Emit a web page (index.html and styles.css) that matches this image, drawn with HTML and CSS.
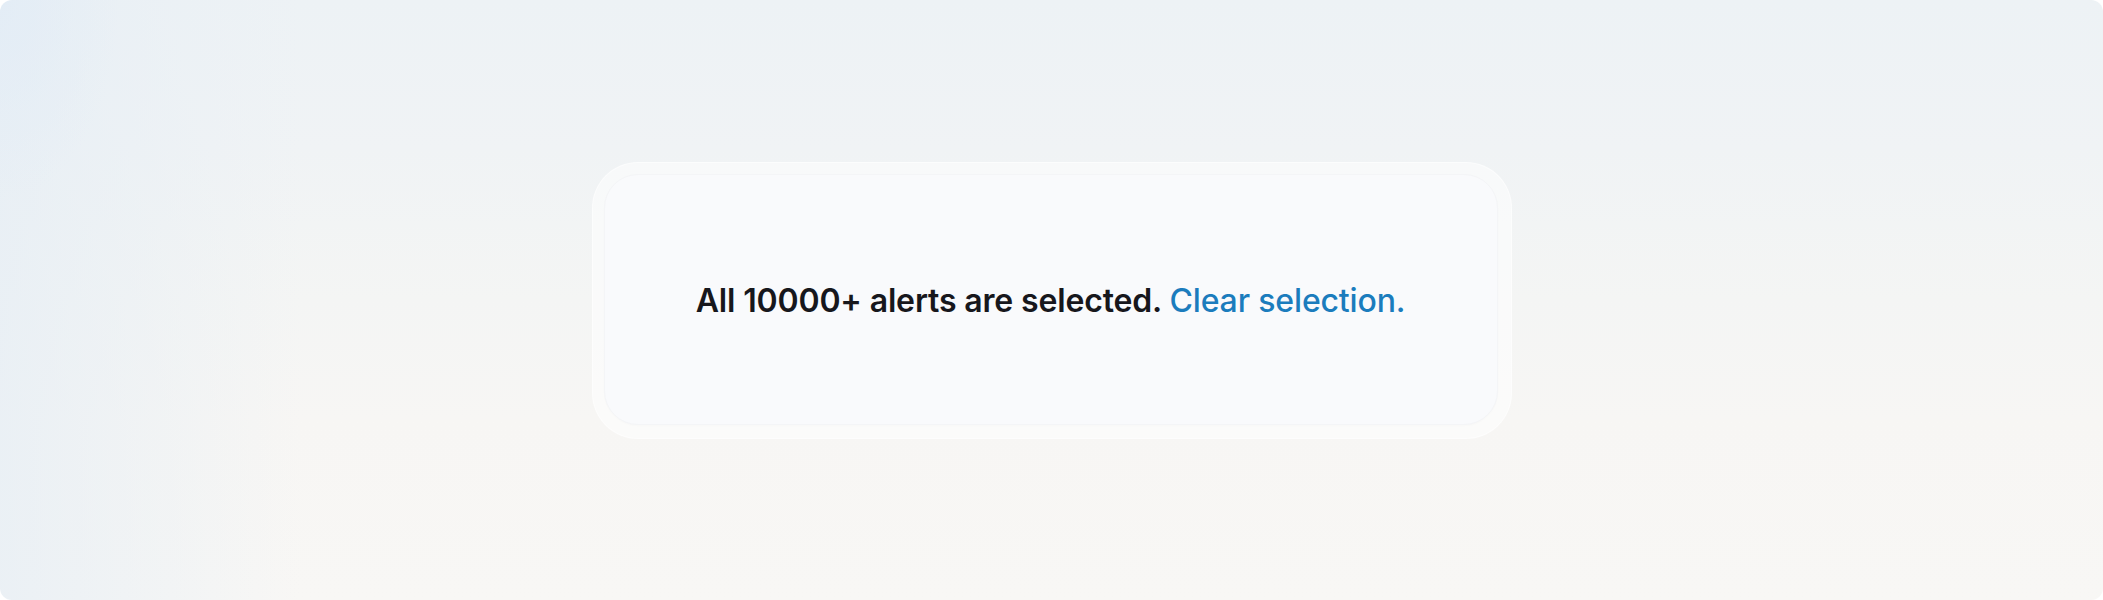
FILE: index.html
```html
<!DOCTYPE html>
<html lang="en">
<head>
<meta charset="utf-8">
<title>Selection banner</title>
<link rel="stylesheet" href="styles.css">
</head>
<body>
<main class="page">
  <div class="ring">
    <div class="card">
      <p class="message">All 10000+ alerts are selected. <a class="clear" href="#">Clear selection.</a></p>
    </div>
  </div>
</main>
</body>
</html>
```
FILE: styles.css
```css
html, body {
  margin: 0;
  padding: 0;
  background: #ffffff;
}
.page {
  width: 2103px;
  height: 600px;
  box-sizing: border-box;
  border-radius: 12px;
  overflow: hidden;
  display: flex;
  align-items: center;
  justify-content: center;
  background:
    radial-gradient(ellipse 120px 200px at 0% 0%, rgba(226, 236, 246, 0.8), rgba(226, 236, 246, 0) 100%),
    linear-gradient(90deg, rgba(230, 238, 245, 0.75) 0px, rgba(232, 239, 245, 0.35) 180px, rgba(236, 241, 245, 0) 300px),
    linear-gradient(180deg, #edf2f5 0%, #f0f3f5 25%, #f4f5f4 50%, #f7f6f4 70%, #f8f7f5 100%);
  font-family: Inter, "Noto Sans", sans-serif;
}
.ring {
  padding: 11px 13px 13px 11px;
  border-radius: 46px;
  background: rgba(255, 255, 255, 0.5);
  border: 1px solid rgba(255, 255, 255, 0.55);
  margin-top: 1px;
}
.card {
  width: 894px;
  height: 251px;
  box-sizing: border-box;
  border-radius: 34px;
  background: #f9fafc;
  border: 1px solid #f4f5f7;
  box-shadow: 0 1px 2px rgba(0, 0, 0, 0.015);
  display: flex;
  align-items: center;
  justify-content: center;
  padding-top: 4px;
}
.message {
  margin: 0;
  font-size: 32px;
  font-weight: 600;
  color: #17171c;
  letter-spacing: -0.15px;
  line-height: 1.2;
}
.clear {
  color: #1b7cbd;
  font-weight: 500;
  text-decoration: none;
}
```
